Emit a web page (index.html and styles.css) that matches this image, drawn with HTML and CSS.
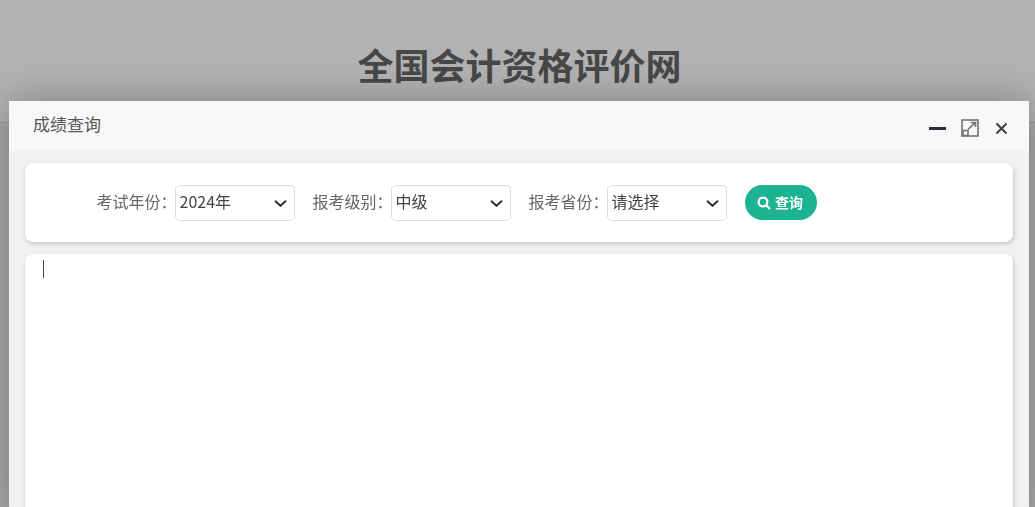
FILE: index.html
```html
<!DOCTYPE html>
<html lang="zh-CN">
<head>
<meta charset="utf-8">
<title>成绩查询</title>
<link rel="stylesheet" href="styles.css">
</head>
<body>
<header class="site-header"><h1 class="site-title">全国会计资格评价网</h1></header>
<div class="backdrop"></div>
<section class="modal">
  <div class="modal-head">
    <span class="modal-title">成绩查询</span>
    <div class="modal-tools">
      <span class="tool-min"></span>
      <svg class="tool-max" width="18" height="18" viewBox="0 0 18 18" fill="none" stroke="#6f7278" stroke-width="1.600"><rect x="1" y="1" width="16" height="16"/><rect x="2" y="11.500" width="5" height="5"/><path d="M7 10.500L14 3.800M9.800 3.500H14.500V8"/></svg>
      <svg class="tool-close" width="13" height="13" viewBox="0 0 13 13" fill="none" stroke="#3d404a" stroke-width="2"><path d="M1.500 1.500l10 10M11.500 1.500l-10 10"/></svg>
    </div>
  </div>
  <div class="modal-body">
    <form class="card filter">
      <label class="field-label">考试年份：</label>
      <div class="select"><span>2024年</span><svg class="chev" width="13" height="7" viewBox="0 0 13 7" fill="none" stroke="#333" stroke-width="2"><path d="M1 .8l5.500 5 5.500-5"/></svg></div>
      <label class="field-label">报考级别：</label>
      <div class="select"><span>中级</span><svg class="chev" width="13" height="7" viewBox="0 0 13 7" fill="none" stroke="#333" stroke-width="2"><path d="M1 .8l5.500 5 5.500-5"/></svg></div>
      <label class="field-label">报考省份：</label>
      <div class="select"><span>请选择</span><svg class="chev" width="13" height="7" viewBox="0 0 13 7" fill="none" stroke="#333" stroke-width="2"><path d="M1 .8l5.500 5 5.500-5"/></svg></div>
      <button class="search-btn" type="button"><svg width="14" height="14" viewBox="0 0 14 14" fill="none" stroke="#fff" stroke-width="2.200"><circle cx="6" cy="6" r="4.400"/><path d="M9.200 9.200l3.800 3.800"/></svg><span>查询</span></button>
    </form>
    <div class="card result"><span class="caret"></span></div>
  </div>
</section>
</body>
</html>
```
FILE: styles.css
```css
* { box-sizing: border-box; }
html, body { margin: 0; height: 100%; overflow: hidden; }
body { background: #f2f2f2; font-family: "Noto Sans CJK SC", "Liberation Sans", sans-serif; }
.site-header { height: 123px; border-bottom: 1px solid #ddd; display: flex; justify-content: center; padding: 40px 0 0 4px; background: #fff; }
.site-title { margin: 0; font-size: 36px; line-height: 48px; font-weight: 700; color: #666; }
.backdrop { position: fixed; inset: 0; background: rgba(0,0,0,.3); }
.modal { position: fixed; left: 9px; top: 101px; width: 1020px; height: 420px; background: #f1f1f1; border-radius: 2px; box-shadow: 0 0 40px rgba(0,0,0,.3); }
.modal-head { height: 50px; background: #f8f8f8; display: flex; align-items: center; justify-content: space-between; padding: 0 21px 0 24px; }
.modal-title { font-size: 17px; line-height: 24px; color: #555; transform: translateY(-2px); }
.modal-tools { display: flex; align-items: center; padding-top: 4px; }
.tool-min { width: 17px; height: 3px; background: #2e2d3c; margin-right: 15px; }
.tool-max { margin-right: 16px; }
.modal-body { padding: 12px 16px; display: flex; flex-direction: column; gap: 12px; }
.card { background: #fff; border-radius: 8px; box-shadow: 1px 2px 4px rgba(0,0,0,.2); }
.filter { height: 79px; display: flex; align-items: center; padding-left: 71px; }
.field-label { font-size: 16px; line-height: 24px; color: #666; width: 79px; white-space: nowrap; transform: translate(.5px, -2px); }
.select { width: 120px; height: 36px; margin-right: 17px; border: 1px solid #ddd; border-radius: 5px; display: flex; align-items: center; justify-content: space-between; padding: 0 7px 0 3.500px; font-size: 16px; color: #444; }
.select span { transform: translateY(-2px); }
.chev { transform: translateY(1px); }
.search-btn { width: 72px; height: 35px; margin-left: 1px; border: 0; border-radius: 18px; background: #1cb393; color: #fff; font-size: 14px; font-weight: 700; display: flex; align-items: center; justify-content: center; gap: 4px; padding: 0 2px 0 0; font-family: inherit; }
.search-btn span { transform: translateY(-1px); }
.result { height: 300px; padding: 6px 18px; }
.caret { display: block; width: 1px; height: 18px; background: #444; }
```
